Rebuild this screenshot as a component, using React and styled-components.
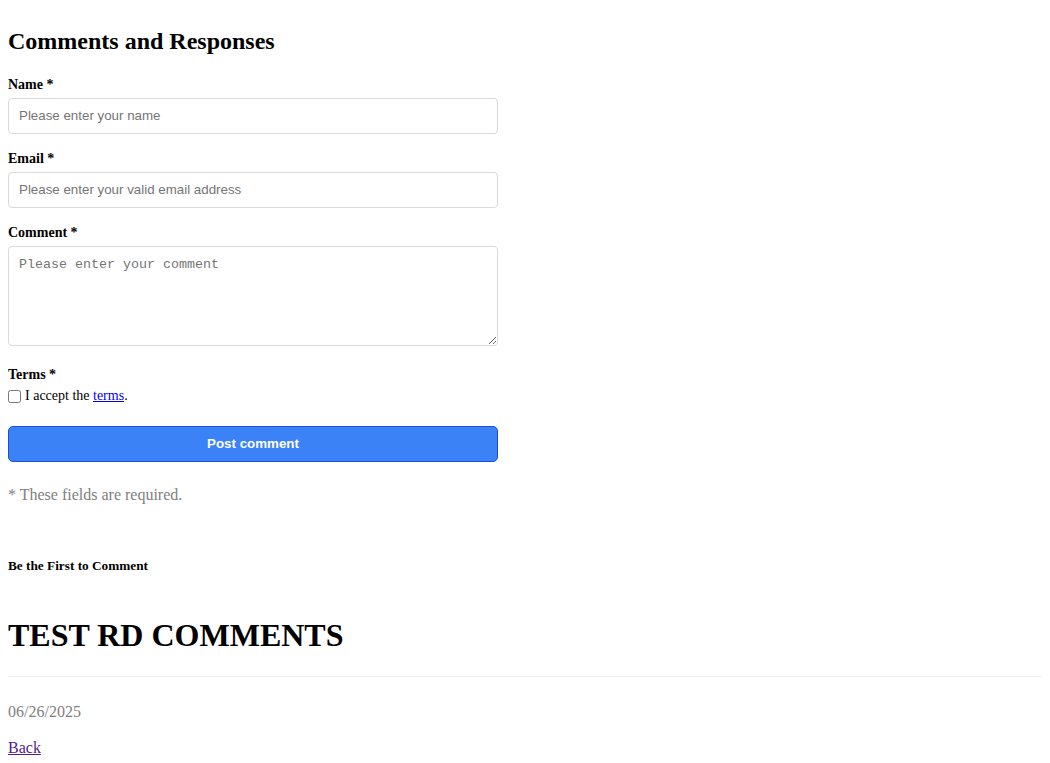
import React from 'react';
import styled, { createGlobalStyle } from 'styled-components';

const color = {
  text: '#000',
  muted: '#808080',
  border: '#d9d9d9',
  blue: '#3b82f6',
  blueDark: '#1d4ed8',
  rule: '#eee'
}

const GlobalStyle = createGlobalStyle`
  body {
    margin: 8px;
    font-family: "Liberation Serif", "Times New Roman", serif;
    color: ${color.text};
    background: #fff;
  }
`;

const Page = styled.div`
  display: flow-root;
`;

const Title = styled.h2`
  font-size: 24px;
  font-weight: 700;
  margin: 19px 0 21px;
  line-height: 28px;
`;

const Form = styled.form`
  width: 490px;
`;

const Field = styled.div`
  margin-bottom: ${props => props.gap || '16px'};
`;

const Label = styled.label`
  display: block;
  font-size: 14px;
  font-weight: 700;
  line-height: 16px;
  padding-top: 1px;
  margin-bottom: 5px;
`;

const TextInput = styled.input`
  display: block;
  box-sizing: border-box;
  width: 100%;
  height: 36px;
  padding: 0 10px 1px;
  border: 1px solid ${color.border};
  border-radius: 4px;
  font-family: "Liberation Sans", Arial, sans-serif;
  font-size: 13.333px;
  color: #000;
  &::placeholder { color: #757575; }
`;

const TextArea = styled.textarea`
  display: block;
  box-sizing: border-box;
  width: 100%;
  height: 100px;
  padding: 10px;
  border: 1px solid ${color.border};
  border-radius: 4px;
  font-family: "Liberation Mono", "DejaVu Sans Mono", monospace;
  font-size: 13.333px;
  &::placeholder { color: #757575; }
`;

const CheckRow = styled.div`
  display: flex;
  align-items: center;
  margin-top: 1px;
  font-size: 14px;
  line-height: 16px;
`;

const Check = styled.input`
  width: 13px;
  height: 13px;
  margin: 0 4px 0 0;
`;

const Link = styled.a`
  color: ${props => props.visited ? '#551a8b' : '#0000ee'};
  text-decoration: underline;
`;

const Submit = styled.button`
  display: block;
  box-sizing: border-box;
  width: 100%;
  height: 36px;
  margin-top: 22px;
  padding-bottom: 2px;
  background: ${color.blue};
  border: 1px solid ${color.blueDark};
  border-radius: 5px;
  color: #fff;
  font-family: "Liberation Sans", Arial, sans-serif;
  font-size: 13.333px;
  font-weight: 700;
  cursor: pointer;
`;

const Note = styled.p`
  color: ${color.muted};
  font-size: 16px;
  line-height: 18px;
  margin: 24px 0 0;
`;

const SubHeading = styled.h5`
  font-size: 13.28px;
  font-weight: 700;
  line-height: 15px;
  margin: 54px 0 0;
`;

const PostTitle = styled.h1`
  font-size: 32px;
  font-weight: 700;
  line-height: 37px;
  margin: 44px 0 22px;
`;

const Rule = styled.hr`
  width: calc(100% + 16px);
  box-sizing: border-box;
  border: 0;
  border-top: 1px solid ${color.rule};
  margin: 0;
`;

const Date = styled.p`
  color: ${color.muted};
  font-size: 16px;
  line-height: 18px;
  margin: 26px 0 18px;
`;

const Back = styled.p`
  font-size: 16px;
  line-height: 18px;
  margin: 0;
`;

export default function App() {
  return (
    <Page>
      <GlobalStyle />
      <Title>Comments and Responses</Title>
      <Form onSubmit={e => e.preventDefault()}>
        <Field>
          <Label htmlFor="name">Name *</Label>
          <TextInput id="name" type="text" placeholder="Please enter your name" />
        </Field>
        <Field>
          <Label htmlFor="email">Email *</Label>
          <TextInput id="email" type="email" placeholder="Please enter your valid email address" />
        </Field>
        <Field gap="20px">
          <Label htmlFor="comment">Comment *</Label>
          <TextArea id="comment" placeholder="Please enter your comment" />
        </Field>
        <Field gap="0">
          <Label>Terms *</Label>
          <CheckRow>
            <Check type="checkbox" id="terms" />
            <span>I accept the <Link href="#terms">terms</Link>.</span>
          </CheckRow>
        </Field>
        <Submit type="submit">Post comment</Submit>
      </Form>
      <Note>* These fields are required.</Note>
      <SubHeading>Be the First to Comment</SubHeading>
      <PostTitle>TEST RD COMMENTS</PostTitle>
      <Rule />
      <Date>06/26/2025</Date>
      <Back><Link visited href="#back">Back</Link></Back>
    </Page>
  );
}
